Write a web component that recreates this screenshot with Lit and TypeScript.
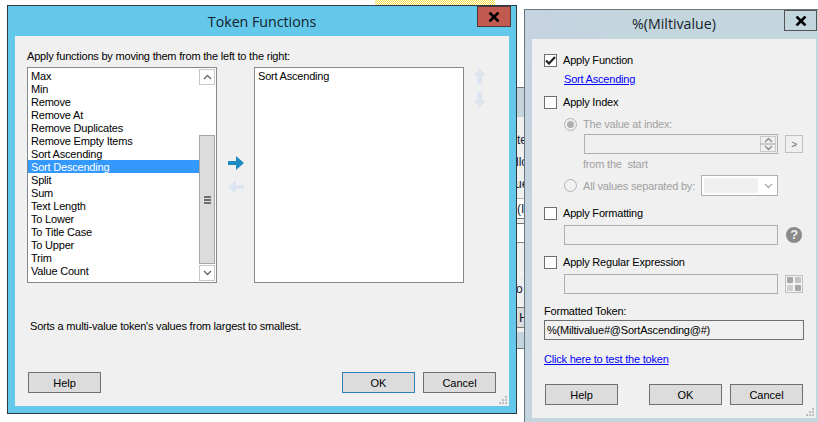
import { LitElement, html, css, svg } from 'lit';
import { customElement } from 'lit/decorators.js';

const FUNCTIONS = [
  'Max', 'Min', 'Remove', 'Remove At', 'Remove Duplicates', 'Remove Empty Items',
  'Sort Ascending', 'Sort Descending', 'Split', 'Sum', 'Text Length', 'To Lower',
  'To Title Case', 'To Upper', 'Trim', 'Value Count',
];

const closeIcon = svg`<svg width="12" height="10" viewBox="0 0 12 10"><path d="M1.5 0.5 L10.5 9.5 M10.5 0.5 L1.5 9.5" stroke="#000" stroke-width="2.6" fill="none"/></svg>`;

const grip = svg`<svg class="grip" width="9" height="9" viewBox="0 0 9 9" fill="#bdbdbd"><rect x="6" y="0" width="2" height="2"/><rect x="3" y="3" width="2" height="2"/><rect x="6" y="3" width="2" height="2"/><rect x="0" y="6" width="2" height="2"/><rect x="3" y="6" width="2" height="2"/><rect x="6" y="6" width="2" height="2"/></svg>`;

const chevron = (up: boolean, color = '#666') => svg`<svg width="9" height="6" viewBox="0 0 9 6"><path d="${up ? 'M1 5 L4.5 1.5 L8 5' : 'M1 1 L4.5 4.5 L8 1'}" stroke="${color}" stroke-width="1.3" fill="none"/></svg>`;

const ARROWS = {
  right: 'M0 5 H8 V0 L16 7 L8 14 V9 H0 Z',
  left: 'M16 5 H8 V0 L0 7 L8 14 V9 H16 Z',
  up: 'M4 16 V8 H0 L6.5 0 L13 8 H9 V16 Z',
  down: 'M4 0 V8 H0 L6.5 16 L13 8 H9 V0 Z',
};

const arrow = (dir: keyof typeof ARROWS, color: string) => {
  const flat = dir === 'left' || dir === 'right';
  const w = flat ? 16 : 13;
  const h = flat ? 14 : 16;
  return svg`<svg width="${w}" height="${h}" viewBox="0 0 ${w} ${h}"><path d="${ARROWS[dir]}" fill="${color}"/></svg>`;
};

@customElement('app-root')
export class AppRoot extends LitElement {
  static styles = css`
    :host {
      display: block;
      width: 818px;
      height: 422px;
      position: relative;
      overflow: hidden;
      background: #fff;
      font-family: 'Liberation Sans', Arial, sans-serif;
      font-size: 11px;
      letter-spacing: -0.2px;
      color: #000;
    }
    .win { position: absolute; box-sizing: border-box; }
    .strip {
      left: 375px; top: 0; width: 120px; height: 5px;
      background: repeating-conic-gradient(#f2dc3c 0 25%, #fff 0 50%) 0 0 / 2px 2px;
    }

    /* window peeking out between the two dialogs */
    .behind {
      left: 500px; top: 87px; width: 30px; height: 262px;
      background: #c5d5dc;
      border: 1px solid #6f7a80;
      padding-top: 29px;
      padding-bottom: 16px;
      font-size: 12px;
      letter-spacing: 0;
      color: #101830;
    }
    .behind-body {
      height: 100%;
      background: #f0f0f0;
      white-space: nowrap;
      padding-top: 12px;
      box-sizing: border-box;
    }
    .line { height: 22px; line-height: 22px; }
    .line.te { margin-left: 16px; }
    .line.llo { margin-left: 15px; }
    .line.ue { margin-left: 14px; }
    .b-value {
      box-sizing: border-box;
      margin-top: 3px;
      height: 20px;
      line-height: 20px;
      padding-left: 16px;
      background: #fff;
      border-top: 1px solid #b0b0b0;
    }
    .b-gap { box-sizing: border-box; height: 5px; border-top: 1px solid #777; }
    .b-white {
      box-sizing: border-box;
      height: 20px;
      background: #fff;
      border-top: 1px solid #777;
      border-bottom: 1px solid #888;
    }
    .b-to {
      box-sizing: border-box;
      margin-top: 30px;
      height: 34px;
      line-height: 30px;
      padding-left: 9px;
      border-top: 1px solid #fafafa;
    }
    .b-btn {
      box-sizing: border-box;
      height: 21px;
      line-height: 19px;
      padding-left: 18px;
      font-size: 13px;
      background: #dcdcdc;
      border-top: 1px solid #777;
      border-bottom: 1px solid #777;
    }

    /* Token Functions */
    .tf {
      left: 7px; top: 5px; width: 510px; height: 409px;
      background: #64c8ea;
      border: 1px solid #2f3a42;
      padding: 0 7px 7px 7px;
      display: flex;
      flex-direction: column;
    }
    .titlebar {
      height: 30px;
      flex: none;
      display: flex;
      align-items: center;
      justify-content: center;
      font-family: 'Open Sans', 'Noto Sans', sans-serif;
      font-size: 14.2px;
      letter-spacing: 0;
      color: #16222c;
    }
    .close {
      box-sizing: border-box;
      position: absolute;
      top: 0;
      height: 21px;
      display: flex;
      align-items: center;
      justify-content: center;
    }
    .tf .close {
      right: 5px;
      width: 34px;
      background: #c25a50;
      border: 1px solid #4c3a3a;
    }
    .client {
      flex: 1;
      position: relative;
      background: #f0f0f0;
      box-sizing: border-box;
    }
    .grip { position: absolute; right: 1px; bottom: 1px; }
    .tf .client { padding: 13px 13px 13px 12px; display: flex; flex-direction: column; }
    .hint { height: 14px; line-height: 14px; white-space: nowrap; }
    .panes { display: flex; margin-top: 4px; height: 216px; }
    .list {
      box-sizing: border-box;
      background: #fff;
      border: 1px solid #85888c;
      height: 216px;
    }
    .list.left { width: 190px; padding: 1px 1px 1px 0; display: flex; }
    .rows { flex: 1; min-width: 0; }
    .row { height: 13px; line-height: 15px; padding-left: 3px; white-space: nowrap; }
    .row.sel { background: #3399ff; color: #fff; }
    .list.right { width: 210px; padding: 1px 0; }
    .scroll { width: 16px; display: flex; flex-direction: column; }
    .sb-btn {
      box-sizing: border-box;
      height: 16px; flex: none;
      border: 1px solid #c8c8c8;
      display: flex; align-items: center; justify-content: center;
      background: #fff;
    }
    .sb-track { height: 50px; }
    .sb-thumb {
      box-sizing: border-box;
      flex: 1;
      margin-bottom: 1px;
      background: #dcdcdc;
      border: 1px solid #a6a6a6;
      display: flex; align-items: center; justify-content: center;
    }
    .mid {
      width: 37px;
      display: flex; flex-direction: column; align-items: center;
      gap: 10px;
      padding-top: 89px;
      box-sizing: border-box;
    }
    .order { display: flex; flex-direction: column; gap: 8px; margin-left: 9px; padding-top: 1px; }
    .desc { margin-top: 36px; margin-left: 3px; height: 14px; line-height: 14px; white-space: nowrap; }
    .buttons { display: flex; margin-top: auto; }
    .btn {
      box-sizing: border-box;
      width: 73px; height: 21px;
      background: #dcdcdc;
      border: 1px solid #707070;
      display: flex; align-items: center; justify-content: center;
      letter-spacing: 0;
    }
    .btn.default { border-color: #2d7fb8; }
    .tf .buttons { margin-left: 1px; }
    .spacer { flex: 1; }
    .btn + .btn { margin-left: 8px; }

    /* %(Miltivalue) */
    .mv {
      left: 524px; top: 9px; width: 294px; height: 420px;
      background: linear-gradient(100deg, #c5d2e2 0, #c3d6dd 30%);
      border: 1px solid #6b767c;
      border-right: none;
      padding: 0 2px 7px 7px;
      display: flex;
      flex-direction: column;
    }
    .mv .titlebar { height: 27px; margin-bottom: 2px; }
    .mv .close {
      right: 1px;
      width: 33px;
      border: 1px solid #555;
    }
    .mv .client { padding: 14px 12px 0 12px; height: 379px; flex: none; }
    .check-row { display: flex; align-items: center; height: 14px; white-space: nowrap; }
    .cb {
      box-sizing: border-box;
      width: 13px; height: 13px; flex: none;
      background: #fff;
      border: 1px solid #6f6f6f;
      margin-right: 6px;
      display: flex; align-items: center; justify-content: center;
    }
    a { color: #0000ff; text-decoration: underline; }
    .link-fn { display: block; margin: 5px 0 0 20px; height: 14px; line-height: 14px; }
    .r-index { margin-top: 9px; }
    .muted { color: #a0a0a0; }
    .radio-row { display: flex; align-items: center; height: 14px; margin: 8px 0 0 20px; white-space: nowrap; }
    .radio {
      box-sizing: border-box;
      width: 13px; height: 13px; flex: none;
      border-radius: 50%;
      border: 1px solid #b5b5b5;
      background: #f0f0f0;
      margin-right: 6px;
      display: flex; align-items: center; justify-content: center;
    }
    .radio i { display: block; width: 7px; height: 7px; border-radius: 50%; background: #b0b0b0; }
    .idx { display: flex; margin: 3px 0 0 40px; align-items: center; }
    .field {
      box-sizing: border-box;
      height: 20px;
      border: 1px solid #adb0b0;
      background: #f0f0f0;
    }
    .idx .field { width: 194px; display: flex; justify-content: flex-end; align-items: center; padding-right: 1px; }
    .spin { width: 16px; display: flex; flex-direction: column; }
    .spin span { box-sizing: border-box; height: 8px; border: 1px solid #c8c8c8; display: flex; align-items: center; justify-content: center; }
    .mini {
      box-sizing: border-box;
      width: 18px; height: 18px; flex: none;
      border: 1px solid #c0c0c0;
      margin-left: 7px;
      display: flex; align-items: center; justify-content: center;
      font-size: 10px;
      color: #666;
    }
    .from { margin: 3px 0 0 39px; height: 14px; line-height: 14px; white-space: pre; }
    .r-v2 { display: flex; align-items: center; margin-top: 4px; margin-left: 20px; height: 21px; white-space: nowrap; }
    .combo {
      box-sizing: border-box;
      width: 77px; height: 21px;
      margin-left: auto;
      margin-right: 26px;
      border: 1px solid #adb0b0;
      background: #fff;
      padding: 2px;
      display: flex; align-items: center;
    }
    .combo b { display: block; width: 54px; height: 15px; background: #f0f0f0; margin-right: 6px; }
    .r-fmt { margin-top: 10px; }
    .f-row { display: flex; align-items: center; margin: 5px 0 0 20px; height: 20px; }
    .f-row .field { width: 214px; }
    .q {
      width: 16px; height: 16px; flex: none;
      margin-left: 8px;
      border-radius: 50%;
      background: #8a8a8a;
      color: #f0f0f0;
      font-weight: bold;
      font-size: 13px;
      line-height: 16px;
      text-align: center;
    }
    .r-rx { margin-top: 10px; }
    .ft { margin-top: 10px; height: 14px; line-height: 14px; }
    .token {
      box-sizing: border-box;
      margin-top: 2px;
      height: 20px; width: 260px;
      border: 1px solid #6f6f6f;
      line-height: 18px;
      padding-left: 2px;
      white-space: nowrap;
    }
    .link-test { display: block; margin-top: 12px; height: 14px; line-height: 14px; }
    .mv .buttons { margin: 18px 0 0 1px; width: 258px; }
  `;

  private renderScrollbar() {
    return html`<div class="scroll">
      <div class="sb-btn">${chevron(true)}</div>
      <div class="sb-track"></div>
      <div class="sb-thumb">
        <svg width="7" height="8" viewBox="0 0 7 8" fill="#6e6e6e"><rect width="7" height="2"/><rect y="3" width="7" height="2"/><rect y="6" width="7" height="2"/></svg>
      </div>
      <div class="sb-btn">${chevron(false)}</div>
    </div>`;
  }

  private renderTokenFunctions() {
    return html`<div class="win tf">
      <div class="titlebar">Token Functions</div>
      <div class="close">${closeIcon}</div>
      <div class="client">
        <div class="hint">Apply functions by moving them from the left to the right:</div>
        <div class="panes">
          <div class="list left">
            <div class="rows">
              ${FUNCTIONS.map((f) => html`<div class="row ${f === 'Sort Descending' ? 'sel' : ''}">${f}</div>`)}
            </div>
            ${this.renderScrollbar()}
          </div>
          <div class="mid">
            ${arrow('right', '#1e8bc3')}
            ${arrow('left', '#dde6f0')}
          </div>
          <div class="list right"><div class="row">Sort Ascending</div></div>
          <div class="order">
            ${arrow('up', '#dde6f0')}
            ${arrow('down', '#dde6f0')}
          </div>
        </div>
        <div class="desc">Sorts a multi-value token's values from largest to smallest.</div>
        <div class="buttons">
          <div class="btn">Help</div>
          <div class="spacer"></div>
          <div class="btn default">OK</div>
          <div class="btn">Cancel</div>
        </div>
        ${grip}
      </div>
    </div>`;
  }

  private renderMultivalue() {
    return html`<div class="win mv">
      <div class="titlebar">%(Miltivalue)</div>
      <div class="close">${closeIcon}</div>
      <div class="client">
        <div class="check-row">
          <span class="cb"><svg width="11" height="9" viewBox="0 0 11 9"><path d="M1 4.5 L4 7.5 L10 1" stroke="#222" stroke-width="2.2" fill="none"/></svg></span>Apply Function
        </div>
        <a class="link-fn">Sort Ascending</a>
        <div class="check-row r-index"><span class="cb"></span>Apply Index</div>
        <div class="radio-row muted"><span class="radio"><i></i></span>The value at index:</div>
        <div class="idx">
          <div class="field">
            <div class="spin">
              <span>${chevron(true, '#888')}</span>
              <span>${chevron(false, '#888')}</span>
            </div>
          </div>
          <div class="mini">&gt;</div>
        </div>
        <div class="from muted">from the  start</div>
        <div class="r-v2 muted">
          <span class="radio"></span>All values separated by:
          <div class="combo"><b></b>${chevron(false, '#aaa')}</div>
        </div>
        <div class="check-row r-fmt"><span class="cb"></span>Apply Formatting</div>
        <div class="f-row"><div class="field"></div><div class="q">?</div></div>
        <div class="check-row r-rx"><span class="cb"></span>Apply Regular Expression</div>
        <div class="f-row">
          <div class="field"></div>
          <div class="mini">
            <svg width="14" height="14" viewBox="0 0 14 14"><rect x="0" y="0" width="6" height="6" rx="1" fill="#a8a8a8"/><rect x="8" y="0" width="6" height="6" rx="1" fill="#c4c4c4"/><rect x="0" y="8" width="6" height="6" rx="1" fill="#d0d0d0"/><rect x="8" y="8" width="6" height="6" rx="1" fill="#a8a8a8"/></svg>
          </div>
        </div>
        <div class="ft">Formatted Token:</div>
        <div class="token">%(Miltivalue#@SortAscending@#)</div>
        <a class="link-test">Click here to test the token</a>
        <div class="buttons">
          <div class="btn">Help</div>
          <div class="spacer"></div>
          <div class="btn">OK</div>
          <div class="btn">Cancel</div>
        </div>
        ${grip}
      </div>
    </div>`;
  }

  render() {
    return html`
      <div class="win strip"></div>
      <div class="win behind">
        <div class="behind-body">
          <div class="line te">te</div>
          <div class="line llo">llo</div>
          <div class="line ue">ue</div>
          <div class="b-value">(I</div>
          <div class="b-gap"></div>
          <div class="b-white"></div>
          <div class="b-to">To</div>
          <div class="b-btn">H</div>
        </div>
      </div>
      ${this.renderTokenFunctions()}
      ${this.renderMultivalue()}
    `;
  }
}
